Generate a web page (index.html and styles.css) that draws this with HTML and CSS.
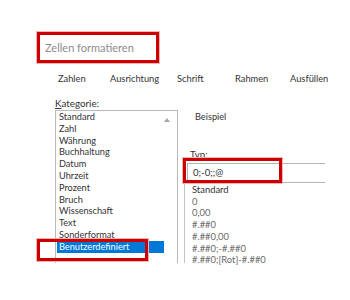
FILE: index.html
```html
<!DOCTYPE html>
<html lang="de">

<head>
    <meta charset="UTF-8">
    <meta name="viewport" content="width=device-width, initial-scale=1.0">
    <title>Zellen formatieren</title>
    <link rel="stylesheet" href="styles.css">
</head>

<body>
    <div class="dialog">
        <div class="title">Zellen formatieren</div>

        <ul class="tabs">
            <li>Zahlen</li>
            <li>Ausrichtung</li>
            <li>Schrift</li>
            <li>Rahmen</li>
            <li>Ausfüllen</li>
        </ul>

        <div class="panel">
            <div class="left">
                <div class="label"><u>K</u>ategorie:</div>
                <div class="listbox">
                    <ul class="cats">
                        <li>Standard</li>
                        <li>Zahl</li>
                        <li>Währung</li>
                        <li>Buchhaltung</li>
                        <li>Datum</li>
                        <li>Uhrzeit</li>
                        <li>Prozent</li>
                        <li>Bruch</li>
                        <li>Wissenschaft</li>
                        <li>Text</li>
                        <li>Sonderformat</li>
                        <li class="selected">Benutzerdefiniert</li>
                    </ul>
                    <span class="arrow"></span>
                </div>
            </div>
            <div class="right">
                <div class="sample">Beispiel</div>
                <div class="typ">Typ:</div>
                <div class="input">0;-0;;@</div>
                <ul class="types">
                    <li class="std">Standard</li>
                    <li>0</li>
                    <li>0,00</li>
                    <li>#.##0</li>
                    <li>#.##0,00</li>
                    <li>#.##0;-#.##0</li>
                    <li>#.##0;[Rot]-#.##0</li>
                </ul>
            </div>
        </div>

        <!-- rote Markierungen -->
        <div class="mark mark-input"></div>
        <div class="mark mark-cat"></div>
    </div>
</body>

</html>
```

FILE: styles.css
```css
* {
    margin: 0;
    padding: 0;
    list-style: none;
    box-sizing: border-box;
}

body {
    background: #fff;
    font-family: Lato, "Open Sans", sans-serif;
    color: #333;
}

.dialog {
    position: relative;
    width: 350px;
    height: 300px;
    padding-top: 32px;
}

.title {
    margin-left: 37px;
    width: 122px;
    height: 31px;
    border: 3px solid #cc0000;
    box-shadow: 0 0 0 1px #f2b3b3;
    padding-left: 5px;
    font-size: 11px;
    line-height: 25px;
    color: #8c8c8c;
}

.tabs {
    display: grid;
    grid-template-columns: 52px 67px 58px 55px auto;
    margin: 9px 0 0 58px;
    font-size: 9.3px;
    line-height: 14px;
    color: #333;
}

.panel {
    display: grid;
    grid-template-columns: 123px auto;
    margin: 10px 0 0 55px;
    height: 167px;
}

.label {
    font-size: 9.8px;
    line-height: 12px;
    height: 14px;
    padding-top: 1px;
    color: #333;
}

.listbox {
    position: relative;
    height: 153px;
    border: 1px solid #b9b9b9;
    border-bottom: none;
    padding: 0 13px 0 1px;
}

.cats li {
    font-size: 9.2px;
    line-height: 11.8px;
    padding-left: 2px;
    color: #333;
    white-space: nowrap;
}

.cats .selected {
    background: #0078d7;
    color: #fff;
}

.arrow {
    position: absolute;
    top: 7px;
    right: 7px;
    border-left: 3px solid transparent;
    border-right: 3px solid transparent;
    border-bottom: 4px solid #a6a6a6;
}

.right {
    padding-top: 15px;
    font-size: 9.2px;
}

.sample {
    margin-left: 17px;
    line-height: 12px;
}

.typ {
    margin: 26px 0 0 12px;
    line-height: 12px;
    font-size: 9.6px;
}

.input {
    margin: 2px 0 0 9px;
    width: 138px;
    height: 20px;
    border: 1px solid #b4b4b4;
    border-right: none;
    padding-left: 5px;
    line-height: 18px;
    font-size: 9.6px;
}

.types {
    margin: 1px 0 0 6px;
    height: 79px;
    border-left: 1px solid #c4c4c4;
    padding-left: 7px;
}

.types li {
    font-size: 9.4px;
    line-height: 11.7px;
    color: #6a6a6a;
    white-space: nowrap;
}

.types .std {
    font-size: 9.4px;
    color: #333;
}

.mark {
    position: absolute;
    border: 3px solid #cc0000;
    box-shadow: 0 0 0 1px #f2b3b3;
}

.mark-input {
    left: 183px;
    top: 158px;
    width: 99px;
    height: 25px;
}

.mark-cat {
    left: 37px;
    top: 239px;
    width: 111px;
    height: 22px;
}
```
